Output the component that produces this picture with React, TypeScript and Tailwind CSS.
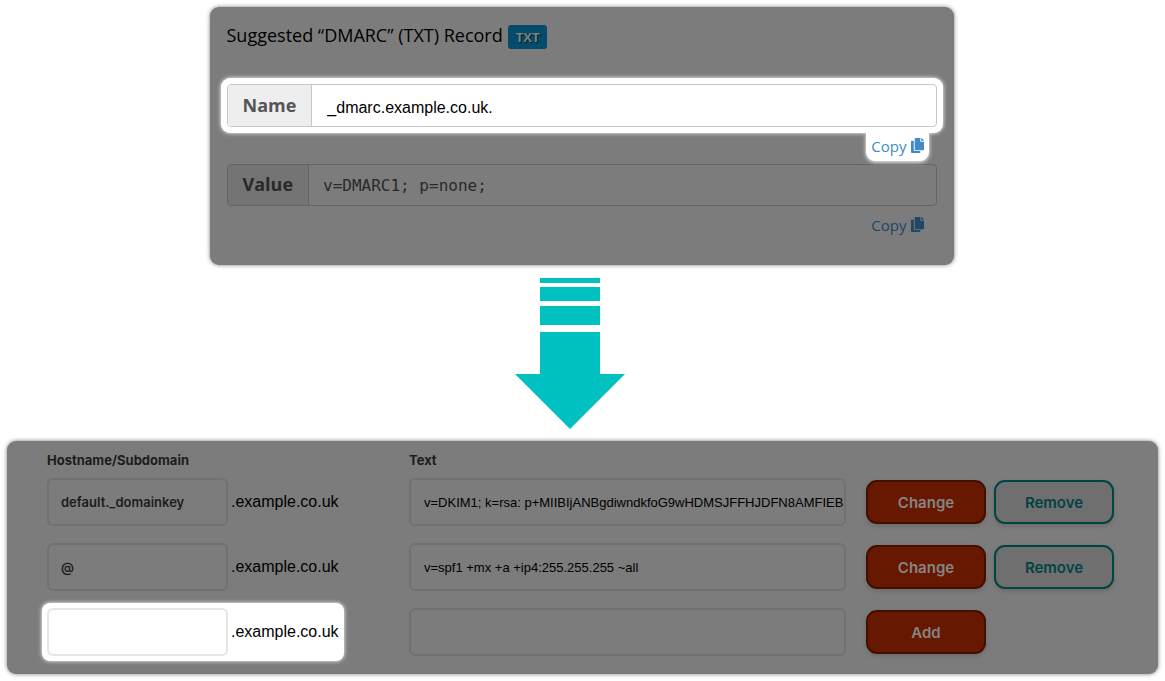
import { FaCopy } from 'react-icons/fa';
import clsx from 'clsx';

type DnsRecord = {
  id: string;
  hostname: string;
  text: string;
  isNew?: boolean;
};

const DOMAIN_SUFFIX = '.example.co.uk';

const RECORDS: DnsRecord[] = [
  {
    id: 'dkim',
    hostname: 'default._domainkey',
    text: 'v=DKIM1; k=rsa: p+MIIBIjANBgdiwndkfoG9wHDMSJFFHJDFN8AMFIEB',
  },
  { id: 'spf', hostname: '@', text: 'v=spf1 +mx +a +ip4:255.255.255 ~all' },
  { id: 'new', hostname: '', text: '', isNew: true },
];

const CopyLink = ({ target, dimmed }: { target: string; dimmed?: boolean }) => (
  <a
    href={`#${target}`}
    className={clsx(
      'flex h-7 items-center gap-1 px-[5px] pb-[3px] text-[15px] leading-5',
      dimmed ? 'text-[#214565]' : 'rounded-b-[9px] bg-white text-[#428bca] shadow-[0_1px_4px_white]'
    )}
  >
    Copy
    <FaCopy className="h-[15px] w-[13px]" aria-hidden />
  </a>
);

const SuggestedRecord = () => (
  <section className="w-full max-w-[744px] rounded-[9px] bg-[#7c7c7c] px-[11px] pt-[18px] pb-[25px] font-['Open_Sans',sans-serif] shadow-[0_0_4px_#7c7c7c]">
    <div className="flex h-6 items-start gap-[5px] px-[6px]">
      <h2 className="text-lg leading-5 font-medium text-black">Suggested “DMARC” (TXT) Record</h2>
      <span className="flex h-6 items-center rounded-[3px] bg-[#064a6c] px-2 pt-px text-[13px] font-bold text-[#7f7f7f] [text-shadow:1px_1px_1px_#022]">
        TXT
      </span>
    </div>

    {/* Highlighted name field */}
    <div className="mt-[29px] rounded-[9px] bg-white p-[6px] shadow-[0_0_4px_white]">
      <div className="flex h-[43px] overflow-hidden rounded-[4px] border border-[#c8c8c8]">
        <label
          htmlFor="dmarc-name"
          className="flex items-center border-r border-[#c8c8c8] bg-[#eeeeee] px-[15px] pb-[2px] text-lg font-bold text-[#555555]"
        >
          Name
        </label>
        <input
          id="dmarc-name"
          readOnly
          defaultValue="_dmarc.example.co.uk."
          className="min-w-0 flex-1 px-[15px] pt-1 font-['Liberation_Sans',sans-serif] text-base text-black outline-none"
        />
      </div>
    </div>
    <div className="flex justify-end pr-[14px]">
      <CopyLink target="dmarc-name" />
    </div>

    {/* Value field */}
    <div className="mx-[6px] mt-[3px] flex h-[42px] overflow-hidden rounded-[4px] border border-[#646464]">
      <label
        htmlFor="dmarc-value"
        className="flex items-center border-r border-[#646464] bg-[#747474] px-[15px] pb-[2px] text-lg font-bold text-[#292929]"
      >
        Value
      </label>
      <input
        id="dmarc-value"
        readOnly
        defaultValue="v=DMARC1; p=none;"
        className="min-w-0 flex-1 px-[14px] pt-[2px] font-['DejaVu_Sans_Mono',monospace] text-base text-[#292929] outline-none"
      />
    </div>
    <div className="mt-[6px] flex justify-end pr-[14px]">
      <CopyLink target="dmarc-value" dimmed />
    </div>
  </section>
);

const DownArrow = () => (
  <svg width="110" height="152" viewBox="0 0 110 152" fill="#00c0c0" aria-hidden>
    <rect x="25" y="1" width="60" height="5" />
    <rect x="25" y="10" width="60" height="14" />
    <rect x="25" y="29" width="60" height="19" />
    <path d="M25 55h60v42h25L55 152 0 97h25z" />
  </svg>
);

const RecordRow = ({ record }: { record: DnsRecord }) => {
  const { id, hostname, text, isNew } = record;

  return (
    <div className="grid grid-cols-[362px_1fr_248px] items-center">
      <div
        className={clsx(
          'flex w-fit items-center gap-[3px]',
          isNew && '-m-[5px] rounded-[8px] bg-white p-[5px] shadow-[0_0_4px_white]'
        )}
      >
        <input
          id={`host-${id}`}
          aria-label="Hostname/Subdomain"
          defaultValue={hostname}
          className={clsx(
            "h-12 w-[181px] rounded-[6px] border-2 px-3 font-['Inter',sans-serif] text-[13px] font-semibold text-[#1c1c1c] outline-none",
            isNew ? 'border-[#e5e5e5]' : 'border-[#717171]'
          )}
        />
        <span className="font-['Liberation_Sans',sans-serif] text-base text-black">{DOMAIN_SUFFIX}</span>
      </div>
      <input
        id={`text-${id}`}
        aria-label="Text"
        defaultValue={text}
        className="mr-5 h-12 min-w-0 rounded-[6px] border-2 border-[#717171] pl-[13px] font-['Liberation_Sans',sans-serif] text-[13px] text-black outline-none"
      />
      <div className="flex gap-2">
        <button
          type="button"
          className="h-11 w-[120px] rounded-[11px] border-2 border-[#420f00] bg-[#661900] pt-[2px] text-[15px] font-semibold text-[#858585] shadow-[0_2px_4px_#6a6a6a]"
        >
          {isNew ? 'Add' : 'Change'}
        </button>
        {!isNew && (
          <button
            type="button"
            className="h-11 w-[120px] rounded-[11px] border-2 border-[#004444] bg-[#6f6f6f] pt-[2px] text-[15px] font-semibold text-[#004444] shadow-[0_2px_4px_#6a6a6a]"
          >
            Remove
          </button>
        )}
      </div>
    </div>
  );
};

const RecordEditor = () => (
  <form className="w-full rounded-[9px] bg-[#7c7c7c] pt-[9px] pr-11 pb-[18px] pl-10 font-['Inter',sans-serif] shadow-[0_0_4px_#7c7c7c]">
    <div className="mb-2 grid grid-cols-[362px_1fr_248px] text-[13px] leading-5 font-bold text-[#1c1c1c]">
      <label htmlFor="host-dkim">Hostname/Subdomain</label>
      <label htmlFor="text-dkim">Text</label>
    </div>
    <div className="flex flex-col gap-[17px]">
      {RECORDS.map(record => (
        <RecordRow key={record.id} record={record} />
      ))}
    </div>
  </form>
);

export default function App() {
  return (
    <main className="flex flex-col items-center bg-white p-[7px]">
      <div className="flex w-full justify-center pr-[2px]">
        <SuggestedRecord />
      </div>
      <div className="pt-3 pr-[26px] pb-3">
        <DownArrow />
      </div>
      <RecordEditor />
    </main>
  );
}
